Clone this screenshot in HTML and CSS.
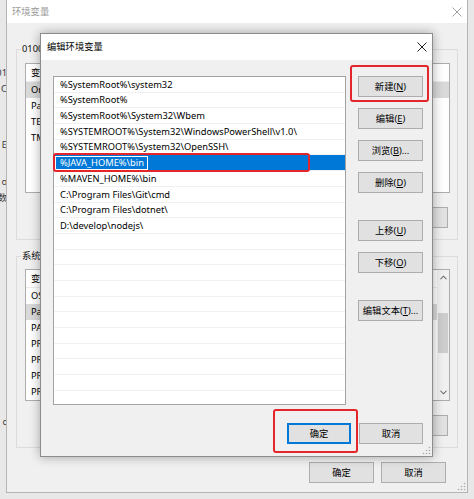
FILE: index.html
```html
<!DOCTYPE html>
<html lang="zh-CN">
<head>
<meta charset="utf-8">
<title>编辑环境变量</title>
<link rel="stylesheet" href="styles.css">
</head>
<body>
<div class="desk">
  <div class="behind">
    <p>01</p>
    <p>C</p>
    <p class="gap-a">E</p>
    <p class="gap-b">o</p>
    <p>数</p>
    <p class="gap-c">c</p>
  </div>

  <section class="env-win">
    <header class="env-title">
      <span>环境变量</span>
      <svg class="close" viewBox="0 0 10 10"><path d="M0.5 0.5L9.5 9.5M9.5 0.5L0.5 9.5"/></svg>
    </header>
    <div class="env-body">
      <div class="group g1">
        <span class="legend">0100 的用户变量(<u>U</u>)</span>
        <div class="lv lv-user">
          <div class="lv-main">
            <div class="lv-head"><span class="c1">变量</span><span class="c2">值</span></div>
            <div class="lv-row sel"><span class="c1">OneDrive</span><span class="c2">C:\Users\0100\OneDrive</span></div>
            <div class="lv-row"><span class="c1">Path</span><span class="c2">C:\Users\0100\AppData\Local\Microsoft\WindowsApps;</span></div>
            <div class="lv-row"><span class="c1">TEMP</span><span class="c2">%USERPROFILE%\AppData\Local\Temp</span></div>
            <div class="lv-row"><span class="c1">TMP</span><span class="c2">%USERPROFILE%\AppData\Local\Temp</span></div>
          </div>
        </div>
        <div class="btn-row">
          <button class="btn wide">新建(<u>N</u>)...</button>
          <button class="btn wide">编辑(<u>E</u>)...</button>
          <button class="btn wide">删除(<u>D</u>)</button>
        </div>
      </div>

      <div class="group g2">
        <span class="legend">系统变量(<u>S</u>)</span>
        <div class="lv lv-sys">
          <div class="lv-main">
            <div class="lv-head"><span class="c1">变量</span><span class="c2">值</span></div>
            <div class="lv-row"><span class="c1">OS</span><span class="c2">Windows_NT</span></div>
            <div class="lv-row sel"><span class="c1">Path</span><span class="c2">%SystemRoot%\system32;%SystemRoot%</span></div>
            <div class="lv-row"><span class="c1">PATHEXT</span><span class="c2">.COM;.EXE;.BAT;.CMD;.VBS;.VBE;.JS</span></div>
            <div class="lv-row"><span class="c1">PROCESSOR_ARCHITECTURE</span><span class="c2">AMD64</span></div>
            <div class="lv-row"><span class="c1">PROCESSOR_IDENTIFIER</span><span class="c2">Intel64 Family 6</span></div>
            <div class="lv-row"><span class="c1">PROCESSOR_LEVEL</span><span class="c2">6</span></div>
            <div class="lv-row"><span class="c1">PROCESSOR_REVISION</span><span class="c2">9e0a</span></div>
          </div>
          <div class="vscroll">
            <svg class="arr" viewBox="0 0 8 5"><path d="M0.5 4.5L4 1L7.5 4.5"/></svg>
            <div class="thumb"></div>
            <svg class="arr down" viewBox="0 0 8 5"><path d="M0.5 0.5L4 4L7.5 0.5"/></svg>
          </div>
        </div>
        <div class="btn-row">
          <button class="btn wide">新建(<u>W</u>)...</button>
          <button class="btn wide">编辑(<u>I</u>)...</button>
          <button class="btn wide">删除(<u>L</u>)</button>
        </div>
      </div>

      <div class="env-foot">
        <button class="btn">确定</button>
        <button class="btn">取消</button>
      </div>
    </div>
    <svg class="grip" viewBox="0 0 10 10"><circle cx="8.5" cy="2.5" r="0.8"/><circle cx="5.5" cy="5.5" r="0.8"/><circle cx="8.5" cy="5.5" r="0.8"/><circle cx="2.5" cy="8.5" r="0.8"/><circle cx="5.5" cy="8.5" r="0.8"/><circle cx="8.5" cy="8.5" r="0.8"/></svg>
  </section>

  <section class="edit-dlg">
    <header class="dlg-title">
      <span>编辑环境变量</span>
      <svg class="close dark" viewBox="0 0 10 10"><path d="M0.5 0.5L9.5 9.5M9.5 0.5L0.5 9.5"/></svg>
    </header>
    <div class="dlg-body">
      <div class="path-list">
        <div class="prow">%SystemRoot%\system32</div>
        <div class="prow">%SystemRoot%</div>
        <div class="prow">%SystemRoot%\System32\Wbem</div>
        <div class="prow">%SYSTEMROOT%\System32\WindowsPowerShell\v1.0\</div>
        <div class="prow">%SYSTEMROOT%\System32\OpenSSH\</div>
        <div class="prow active"><span class="edit">%JAVA_HOME%\bin</span></div>
        <div class="prow">%MAVEN_HOME%\bin</div>
        <div class="prow">C:\Program Files\Git\cmd</div>
        <div class="prow">C:\Program Files\dotnet\</div>
        <div class="prow">D:\develop\nodejs\</div>
        <div class="prow"></div>
        <div class="prow"></div>
        <div class="prow"></div>
        <div class="prow"></div>
        <div class="prow"></div>
        <div class="prow"></div>
        <div class="prow"></div>
        <div class="prow"></div>
        <div class="prow"></div>
        <div class="prow"></div>
        <div class="prow"></div>
      </div>
      <div class="btn-col">
        <button class="btn">新建(<u>N</u>)</button>
        <button class="btn">编辑(<u>E</u>)</button>
        <button class="btn">浏览(<u>B</u>)...</button>
        <button class="btn">删除(<u>D</u>)</button>
        <button class="btn spaced">上移(<u>U</u>)</button>
        <button class="btn">下移(<u>O</u>)</button>
        <button class="btn spaced">编辑文本(<u>T</u>)...</button>
      </div>
      <div class="dlg-foot">
        <button class="btn default">确定</button>
        <button class="btn">取消</button>
      </div>
    </div>
    <svg class="grip" viewBox="0 0 10 10"><circle cx="8.5" cy="2.5" r="0.8"/><circle cx="5.5" cy="5.5" r="0.8"/><circle cx="8.5" cy="5.5" r="0.8"/><circle cx="2.5" cy="8.5" r="0.8"/><circle cx="5.5" cy="8.5" r="0.8"/><circle cx="8.5" cy="8.5" r="0.8"/></svg>

    <div class="hl hl-row"></div>
    <div class="hl hl-new"></div>
    <div class="hl hl-ok"></div>
  </section>
</div>
</body>
</html>
```

FILE: styles.css
```css
* { box-sizing: border-box; }
html, body { margin: 0; padding: 0; }
body {
  width: 474px;
  height: 499px;
  overflow: hidden;
  background: #e8e8e8;
  font-family: "Noto Sans", "Noto Sans CJK SC", sans-serif;
  font-size: 9.3px;
  line-height: 1;
  color: #000;
}
u { text-decoration: underline; text-underline-offset: 1px; }

.desk { position: relative; width: 474px; height: 499px; }

/* window further behind, only a sliver visible */
.behind { width: 7px; height: 499px; overflow: hidden; padding-top: 65px; color: #3a3a3a; }
.behind p { margin: 0; height: 16px; display: flex; align-items: center; justify-content: flex-end; white-space: nowrap; }
.behind .gap-a { margin-top: 40px; }
.behind .gap-b { margin-top: 21px; }
.behind .gap-c { margin-top: 208px; }

/* ---------- background window ---------- */
.env-win {
  position: absolute;
  left: 6px;
  top: 0;
  width: 462px;
  height: 493px;
  background: #f0f0f0;
  border: 1px solid #b4b4b4;
  border-top: none;
  display: flex;
  flex-direction: column;
}
.env-title {
  height: 23px;
  flex: none;
  background: #fff;
  color: #9a9a9a;
  display: flex;
  align-items: center;
  justify-content: space-between;
  padding: 0 5px 0 5px;
}
.close { width: 10px; height: 10px; fill: none; stroke: #a0a0a0; stroke-width: 1; }
.close.dark { stroke: #222; }

.env-body { display: flex; flex-direction: column; padding: 0 9px; }

.group {
  border: 1px solid #dcdcdc;
  padding: 0 7px 11px 8px;
  display: flex;
  flex-direction: column;
}
.g1 { margin-top: 26px; }
.g2 { margin-top: 16px; }
.legend {
  align-self: flex-start;
  height: 16px;
  margin: -9px 0 0 -4px;
  padding: 0 1px;
  background: #f0f0f0;
  display: flex;
  align-items: center;
  color: #111;
}
.lv {
  background: #fff;
  border: 1px solid #adadad;
  display: flex;
  overflow: hidden;
}
.lv-user { margin-top: 6px; height: 130px; }
.lv-sys { margin-top: 5px; height: 132px; }
.lv-main { flex: 1; min-width: 0; }
.lv-head { height: 18px; display: flex; align-items: center; border-bottom: 1px solid #ececec; }
.lv-row { height: 16px; display: flex; align-items: center; }
.lv-row.sel { background: #d9d9d9; }
.c1 { width: 150px; padding-left: 5px; white-space: nowrap; overflow: hidden; }
.c2 { flex: 1; padding-left: 5px; white-space: nowrap; overflow: hidden; }

.vscroll {
  width: 12px;
  flex: none;
  background: #f0f0f0;
  display: flex;
  flex-direction: column;
  align-items: center;
}
.arr { width: 7px; height: 5px; margin-top: 5px; fill: none; stroke: #606060; stroke-width: 1.2; }
.arr.down { margin-top: auto; margin-bottom: 5px; }
.thumb { width: 10px; height: 40px; margin-top: 33px; background: #cdcdcd; }

.btn-row { display: flex; justify-content: flex-end; gap: 7px; margin-top: 14px; margin-right: 2px; }
.env-foot { display: flex; justify-content: flex-end; gap: 7px; margin-top: 14px; margin-right: 12px; }

.btn {
  width: 65px;
  height: 21px;
  padding: 0;
  background: #e1e1e1;
  border: 1px solid #adadad;
  font: inherit;
  color: #000;
  display: flex;
  align-items: center;
  justify-content: center;
}
.btn.wide { width: 75px; }
.btn.default { border-color: #0078d7; box-shadow: inset 0 0 0 1px #0078d7; }

.grip { position: absolute; right: 1px; bottom: 1px; width: 10px; height: 10px; fill: #a8a8a8; }

/* ---------- edit dialog ---------- */
.edit-dlg {
  position: absolute;
  left: 40px;
  top: 33px;
  width: 393px;
  height: 424px;
  background: #f0f0f0;
  border: 1px solid #8c8c8c;
  box-shadow: 0 0 10px rgba(0, 0, 0, 0.33);
  display: flex;
  flex-direction: column;
}
.dlg-title {
  height: 26px;
  flex: none;
  background: #fff;
  display: flex;
  align-items: center;
  justify-content: space-between;
  padding: 0 5px 0 6px;
}
.dlg-body {
  display: grid;
  grid-template-columns: 293px 65px;
  grid-template-rows: 329px auto;
  column-gap: 12px;
  padding: 16px 9px 0 12px;
}
.path-list {
  background: #fff;
  border: 1px solid #a3a3a3;
  overflow: hidden;
}
.prow {
  height: 15.7px;
  border-bottom: 1px solid #f0f0f0;
  padding-left: 6px;
  display: flex;
  align-items: center;
  white-space: nowrap;
}
.prow.active { background: #0078d7; color: #fff; }
.edit {
  height: 14px;
  margin-left: -5px;
  padding: 0 3px 0 4px;
  border: 1px solid #fff;
  background: #0078d7;
  color: #fff;
  display: flex;
  align-items: center;
}
.btn-col { display: flex; flex-direction: column; gap: 11px; }
.btn-col .spaced { margin-top: 16px; }
.dlg-foot {
  grid-column: 1 / -1;
  display: flex;
  justify-content: flex-end;
  gap: 8px;
  margin-top: 18px;
}
.dlg-foot .btn { width: 64px; }

/* red annotation boxes */
.hl { position: absolute; border: 2px solid #e3262b; border-radius: 3px; }
.hl-row { left: 12px; top: 119px; width: 257px; height: 19px; }
.hl-new { left: 309px; top: 31px; width: 79px; height: 37px; }
.hl-ok { left: 232px; top: 375px; width: 85px; height: 44px; }
```
